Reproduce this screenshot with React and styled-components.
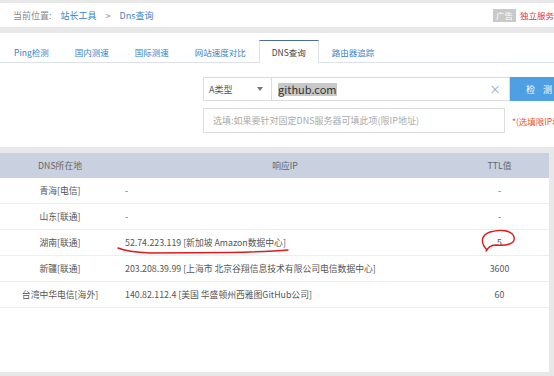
import React from 'react'
import styled, { createGlobalStyle } from 'styled-components';

const GlobalStyle = createGlobalStyle`
    html, body {
        margin: 0;
        background: #e8e8e8;
        overflow: hidden;
        font-family: "Noto Sans CJK SC", "Noto Sans", sans-serif;
    }
`

const tabs = ['Ping检测', '国内测速', '国际测速', '网站速度对比', 'DNS查询', '路由器追踪']

const rows = [
    { place: '青海[电信]', ip: '-', ttl: '-' },
    { place: '山东[联通]', ip: '-', ttl: '-' },
    { place: '湖南[联通]', ip: '52.74.223.119 [新加坡 Amazon数据中心]', ttl: '5' },
    { place: '新疆[联通]', ip: '203.208.39.99 [上海市 北京谷翔信息技术有限公司电信数据中心]', ttl: '3600' },
    { place: '台湾中华电信[海外]', ip: '140.82.112.4 [美国 华盛顿州西雅图GitHub公司]', ttl: '60' },
]

function App() {
    return (
        <Page>
            <GlobalStyle />
            <Breadcrumb>
                <Crumbs>
                    <Muted>当前位置:</Muted>
                    <Link>站长工具</Link>
                    <Muted>&gt;</Muted>
                    <Link>Dns查询</Link>
                </Crumbs>
                <AdGroup>
                    <AdBadge>广告</AdBadge>
                    <AdText>独立服务</AdText>
                </AdGroup>
            </Breadcrumb>

            <ToolPanel>
                <TabBar>
                    {tabs.map(t => (
                        <Tab key={t} active={t === 'DNS查询'}>{t}</Tab>
                    ))}
                </TabBar>
                <Form>
                    <FormRow>
                        <Select>
                            A类型
                            <Caret />
                        </Select>
                        <Query>
                            <Selected>github.com</Selected>
                            <Clear>×</Clear>
                        </Query>
                        <CheckButton>检 测</CheckButton>
                    </FormRow>
                    <FormRow>
                        <ServerInput>选填:如果要针对固定DNS服务器可填此项(限IP地址)</ServerInput>
                        <Hint>*(选填限IP地址)</Hint>
                    </FormRow>
                </Form>
            </ToolPanel>

            <ResultPanel>
                <Table>
                    <HeadRow>
                        <Cell>DNS所在地</Cell>
                        <Cell>响应IP</Cell>
                        <Cell>TTL值</Cell>
                    </HeadRow>
                    {rows.map(r => (
                        <Row key={r.place}>
                            <Cell>{r.place}</Cell>
                            <Cell left>{r.ip}</Cell>
                            <Cell>{r.ttl}</Cell>
                        </Row>
                    ))}
                </Table>
                <Marks width="549" height="219" viewBox="0 0 549 219">
                    <path d="M118 95 Q127 99 150 100 L230 99.5 Q270 98.5 288 97" />
                    <path d="M487 97 C480 90 481 82 490 79 C500 76 512 77 514 84 C516 91 506 93 496 92 C490 92 488 95 486 98" />
                </Marks>
            </ResultPanel>
        </Page>
    )
}

export default App

const Page = styled.div`
    width: 554px;
    height: 376px;
    padding-top: 3px;
    box-sizing: border-box;
    display: flex;
    flex-direction: column;
    gap: 6px;
    overflow: hidden;
`

const Breadcrumb = styled.div`
    height: 24px;
    background: #fff;
    display: flex;
    align-items: center;
    padding-left: 13px;
    font-size: 9px;
`

const Crumbs = styled.div`
    display: flex;
    gap: 9px;
    flex: 1;
`

const Muted = styled.span`
    color: #8a8a8a;
`

const Link = styled.span`
    color: #3a7fc8;
`

const AdGroup = styled.div`
    display: flex;
    align-items: center;
    gap: 4px;
    flex-shrink: 0;
    white-space: nowrap;
`

const AdBadge = styled.span`
    background: #c9c9c9;
    color: #fff;
    font-size: 8.5px;
    padding: 0 3px;
    line-height: 13px;
`

const AdText = styled.span`
    color: #e8322f;
    font-size: 8.5px;
`

const ToolPanel = styled.div`
    background: #fff;
    height: 114px;
    padding-top: 7px;
    box-sizing: border-box;
`

const TabBar = styled.div`
    display: flex;
    height: 22px;
    border-bottom: 1px solid #dde2ea;
    padding-left: 1px;
`

const Tab = styled.div`
    padding: 0 12px;
    display: flex;
    align-items: center;
    font-size: 8.5px;
    color: ${p => p.active ? '#444' : '#3a7fc8'};
    background: #fff;
    border: 1px solid ${p => p.active ? '#dde2ea' : 'transparent'};
    border-top-color: ${p => p.active ? '#4f6d97' : 'transparent'};
    border-bottom: none;
    height: ${p => p.active ? '23px' : '22px'};
    box-sizing: border-box;
`

const Form = styled.div`
    padding: 14px 0 0 203px;
    display: flex;
    flex-direction: column;
    gap: 7px;
`

const FormRow = styled.div`
    display: flex;
    align-items: center;
    & > * {
        flex-shrink: 0;
    }
`

const Select = styled.div`
    width: 69px;
    height: 24px;
    box-sizing: border-box;
    border: 1px solid #dcdcdc;
    display: flex;
    align-items: center;
    justify-content: space-between;
    padding: 0 8px 0 5px;
    font-size: 9px;
    color: #555;
`

const Caret = styled.span`
    width: 0;
    height: 0;
    border-left: 3px solid transparent;
    border-right: 3px solid transparent;
    border-top: 4px solid #777;
`

const Query = styled.div`
    width: 238px;
    height: 24px;
    box-sizing: border-box;
    border: 1px solid #dcdcdc;
    border-left: none;
    display: flex;
    align-items: center;
    justify-content: space-between;
    padding: 0 8px 0 6px;
`

const Selected = styled.span`
    background: #c8c8c8;
    color: #333;
    font-size: 11px;
    line-height: 12px;
    padding-bottom: 1px;
`

const Clear = styled.span`
    color: #999;
    font-size: 14px;
    font-family: "DejaVu Sans", sans-serif;
    font-weight: 300;
`

const CheckButton = styled.div`
    width: 44px;
    height: 24px;
    background: #4ea0e2;
    color: #fff;
    font-size: 9px;
    display: flex;
    align-items: center;
    padding-left: 16px;
    box-sizing: border-box;
    letter-spacing: 3px;
    white-space: nowrap;
`

const ServerInput = styled.div`
    width: 302px;
    height: 25px;
    box-sizing: border-box;
    border: 1px solid #dcdcdc;
    display: flex;
    align-items: center;
    padding-left: 9px;
    font-size: 9px;
    color: #aaa;
`

const Hint = styled.span`
    margin-left: 7px;
    font-size: 8.5px;
    color: #f0502e;
    white-space: nowrap;
`

const ResultPanel = styled.div`
    position: relative;
    width: 549px;
    height: 219px;
    background: #fff;
`

const Table = styled.div`
    display: flex;
    flex-direction: column;
    font-size: 8.8px;
    color: #555;
`

const Row = styled.div`
    display: grid;
    grid-template-columns: 120px 330px 99px;
    height: 26px;
    border-bottom: 1px solid #eee;
    box-sizing: border-box;
    align-items: center;
`

const HeadRow = styled(Row)`
    height: 25px;
    background: #c9d1e1;
    border-bottom: none;
    color: #666;
`

const Cell = styled.div`
    text-align: ${p => p.left ? 'left' : 'center'};
    padding-left: ${p => p.left ? '5px' : '0'};
    white-space: nowrap;
`

const Marks = styled.svg`
    position: absolute;
    top: 0;
    left: 0;
    pointer-events: none;
    path {
        fill: none;
        stroke: #e01a1a;
        stroke-width: 1.4;
        stroke-linecap: round;
    }
`
